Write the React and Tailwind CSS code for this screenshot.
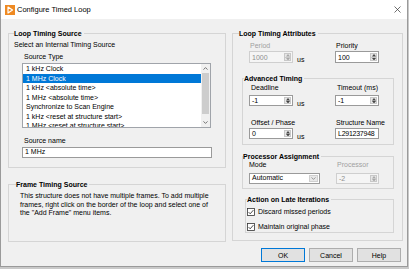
import React from 'react'

const sources = [
  '1 kHz Clock',
  '1 MHz Clock',
  '1 kHz <absolute time>',
  '1 MHz <absolute time>',
  'Synchronize to Scan Engine',
  '1 kHz <reset at structure start>',
  '1 MHz <reset at structure start>',
]

function Group({ title, titleLeft, className, children }) {
  return (
    <div className={`relative border border-[#d5d5d5] ${className}`}>
      <span className={`absolute -top-[5.5px] ${titleLeft} bg-[#f0f0f0] pr-[2px] font-bold leading-[9px]`}>
        {title}
      </span>
      {children}
    </div>
  )
}

function Arrow({ up, color }) {
  return (
    <svg width="4" height="2.5" viewBox="0 0 4 2.5">
      <path d={up ? 'M0 2.5 L2 0 L4 2.5 Z' : 'M0 0 L2 2.5 L4 0 Z'} fill={color} />
    </svg>
  )
}

function Spin({ disabled }) {
  const c = disabled ? '#a8a8a8' : '#444'
  return (
    <div className="my-[1px] mr-[1px] flex w-[7px] flex-col border border-[#c8c8c8] bg-[#e6e6e6]">
      <div className="flex flex-1 items-center justify-center">
        <Arrow up color={c} />
      </div>
      <div className="h-px bg-[#c8c8c8]" />
      <div className="flex flex-1 items-center justify-center">
        <Arrow color={c} />
      </div>
    </div>
  )
}

function Field({ value, disabled, spin, h = 'h-[11px]', w = 'w-[44px]', tight }) {
  return (
    <div
      className={`flex ${h} ${w} overflow-hidden border ${
        disabled ? 'border-[#cfcfcf] bg-[#f5f5f5] text-[#8e8e8e]' : 'border-[#9a9a9a] bg-white text-black'
      }`}
    >
      <span className={`flex flex-1 items-center pl-[2px] leading-none ${tight ? 'tracking-[-0.25px]' : ''}`}>
        {value}
      </span>
      {spin && <Spin disabled={disabled} />}
    </div>
  )
}

function Label({ children, disabled, ml = 'ml-[1px]' }) {
  return <div className={`${ml} leading-[9px] ${disabled ? 'text-[#a0a0a0]' : 'text-black'}`}>{children}</div>
}

function Check({ label }) {
  return (
    <div className="flex h-[9px] items-center gap-[3px]">
      <svg width="8" height="8" viewBox="0 0 8 8">
        <rect x="0.5" y="0.5" width="7" height="7" fill="#fff" stroke="#333" strokeWidth="0.8" />
        <path d="M1.6 4.1 L3.2 5.8 L6.4 2.1" fill="none" stroke="#222" strokeWidth="0.8" />
      </svg>
      <span className="leading-[9px]">{label}</span>
    </div>
  )
}

export default function App() {
  return (
    <div className="h-[269px] w-[409px] bg-[#c9c9c9] font-['Liberation_Sans',Arial,sans-serif] text-[7px] text-black">
      <div className="flex h-[267px] w-[408px] flex-col border border-t-0 border-[#9a9a9a] bg-[#f0f0f0]">
        {/* title bar */}
        <div className="flex h-[19px] items-center bg-white pl-[4px] pr-[6px]">
          <svg width="10" height="10" viewBox="0 0 10 10">
            <rect width="10" height="10" fill="#ef8a22" />
            <path d="M3 2 L7.5 5 L3 8 Z" fill="none" stroke="#fff" strokeWidth="1.2" strokeLinejoin="round" />
          </svg>
          <span className="ml-[2px] text-[7.5px]">Configure Timed Loop</span>
          <svg className="ml-auto" width="7" height="7" viewBox="0 0 7 7">
            <path d="M0.5 0.5 L6.5 6.5 M6.5 0.5 L0.5 6.5" stroke="#333" strokeWidth="0.7" />
          </svg>
        </div>

        <div className="flex gap-[6px] pl-[7px] pt-[14px]">
          {/* left column */}
          <div className="flex w-[218px] flex-col">
            <Group title="Loop Timing Source" titleLeft="left-[5px]" className="h-[135px]">
              <div className="pl-[5px] pt-[6px] leading-[9px]">Select an Internal Timing Source</div>
              <div className="ml-[15px] mt-[3px] leading-[9px]">Source Type</div>
              <div className="ml-[13px] mt-[2px] flex h-[65px] w-[189px] overflow-hidden border border-[#a0a4aa] bg-white">
                <div className="flex-1">
                  {sources.map((s, i) => (
                    <div
                      key={s}
                      className={`h-[9.5px] pl-[3px] leading-[9.5px] ${i === 1 ? 'bg-[#0078d7] text-white' : ''}`}
                    >
                      {s}
                    </div>
                  ))}
                </div>
                <div className="flex w-[9px] flex-col bg-[#f0f0f0]">
                  <div className="flex h-[9px] items-center justify-center">
                    <svg width="5" height="3" viewBox="0 0 5 3">
                      <path d="M0.5 2.6 L2.5 0.6 L4.5 2.6" fill="none" stroke="#555" strokeWidth="0.8" />
                    </svg>
                  </div>
                  <div className="mx-[1px] h-[41px] bg-[#cdcdcd]" />
                  <div className="flex-1" />
                  <div className="flex h-[9px] items-center justify-center">
                    <svg width="5" height="3" viewBox="0 0 5 3">
                      <path d="M0.5 0.4 L2.5 2.4 L4.5 0.4" fill="none" stroke="#555" strokeWidth="0.8" />
                    </svg>
                  </div>
                </div>
              </div>
              <div className="ml-[15px] mt-[8px] leading-[9px]">Source name</div>
              <div className="ml-[13px] mt-[2px] flex h-[11px] w-[190px] items-center border border-[#9a9a9a] bg-white pl-[2px]">
                1 MHz
              </div>
            </Group>

            <Group title="Frame Timing Source" titleLeft="left-[7px]" className="mt-[16px] h-[58px]">
              <p className="pl-[11px] pt-[7px] leading-[8.5px]">
                This structure does not have multiple frames. To add multiple
                <br />
                frames, right click on the border of the loop and select one of
                <br />
                the "Add Frame" menu items.
              </p>
            </Group>
          </div>

          {/* right column */}
          <Group title="Loop Timing Attributes" titleLeft="left-[6px]" className="h-[208px] w-[171px]">
            <div className="flex pl-[16px] pt-[7px]">
              <div className="w-[86px]">
                <Label disabled>Period</Label>
                <div className="mt-[1px] flex items-start">
                  <Field value="1000" disabled spin h="h-[12px]" />
                  <span className="ml-[4px] mt-[4px] leading-[9px]">us</span>
                </div>
              </div>
              <div>
                <Label>Priority</Label>
                <div className="mt-[1px]">
                  <Field value="100" spin h="h-[12px]" />
                </div>
              </div>
            </div>

            <Group title="Advanced Timing" titleLeft="left-[1px]" className="ml-[9px] mt-[14px] h-[67px] w-[152px]">
              <div className="flex pl-[6px] pt-[4px]">
                <div className="w-[86px]">
                  <Label ml="ml-[2px]">Deadline</Label>
                  <div className="mt-[3px] flex items-start">
                    <Field value="-1" spin />
                    <span className="ml-[4px] mt-[4px] leading-[9px]">us</span>
                  </div>
                </div>
                <div>
                  <Label ml="ml-[2px]">Timeout (ms)</Label>
                  <div className="mt-[3px]">
                    <Field value="-1" spin />
                  </div>
                </div>
              </div>
              <div className="mt-[10px] flex pl-[6px]">
                <div className="w-[86px]">
                  <Label ml="ml-[2px]">Offset / Phase</Label>
                  <div className="mt-[1px] flex items-start">
                    <Field value="0" spin />
                    <span className="ml-[4px] mt-[4px] leading-[9px]">us</span>
                  </div>
                </div>
                <div>
                  <Label>Structure Name</Label>
                  <div className="mt-[1px]">
                    <Field value="L291237948" tight />
                  </div>
                </div>
              </div>
            </Group>

            <Group title="Processor Assignment" titleLeft="left-0" className="ml-[9px] mt-[11px] h-[33px] w-[152px]">
              <div className="flex pl-[6px] pt-[3px]">
                <div className="w-[87px]">
                  <Label ml="ml-0">Mode</Label>
                  <div className="mt-[4px] flex h-[11px] w-[71px] border border-[#9a9a9a] bg-white">
                    <span className="flex flex-1 items-center pl-[2px]">Automatic</span>
                    <div className="my-[1px] mr-[1px] flex w-[9px] items-center justify-center border border-[#cfcfcf] bg-[#e8e8e8]">
                      <svg width="5" height="3" viewBox="0 0 5 3">
                        <path d="M0.5 0.4 L2.5 2.4 L4.5 0.4" fill="none" stroke="#777" strokeWidth="0.7" />
                      </svg>
                    </div>
                  </div>
                </div>
                <div>
                  <Label disabled>Processor</Label>
                  <div className="mt-[4px]">
                    <Field value="-2" disabled spin w="w-[43px]" />
                  </div>
                </div>
              </div>
            </Group>

            <Group title="Action on Late Iterations" titleLeft="left-[1px]" className="ml-[12px] mt-[10px] h-[34px] w-[149px]">
              <div className="pl-[1px] pt-[7px]">
                <Check label="Discard missed periods" />
                <div className="mt-[6px]">
                  <Check label="Maintain original phase" />
                </div>
              </div>
            </Group>
          </Group>
        </div>

        <div className="mt-[6px] flex justify-end gap-[4px] pr-[6px]">
          <button className="h-[14px] w-[44px] border border-[#0078d7] bg-[#e1e1e1] leading-none">OK</button>
          <button className="h-[14px] w-[44px] border border-[#adadad] bg-[#e1e1e1] leading-none">Cancel</button>
          <button className="h-[14px] w-[44px] border border-[#adadad] bg-[#e1e1e1] leading-none">Help</button>
        </div>
      </div>
    </div>
  )
}
